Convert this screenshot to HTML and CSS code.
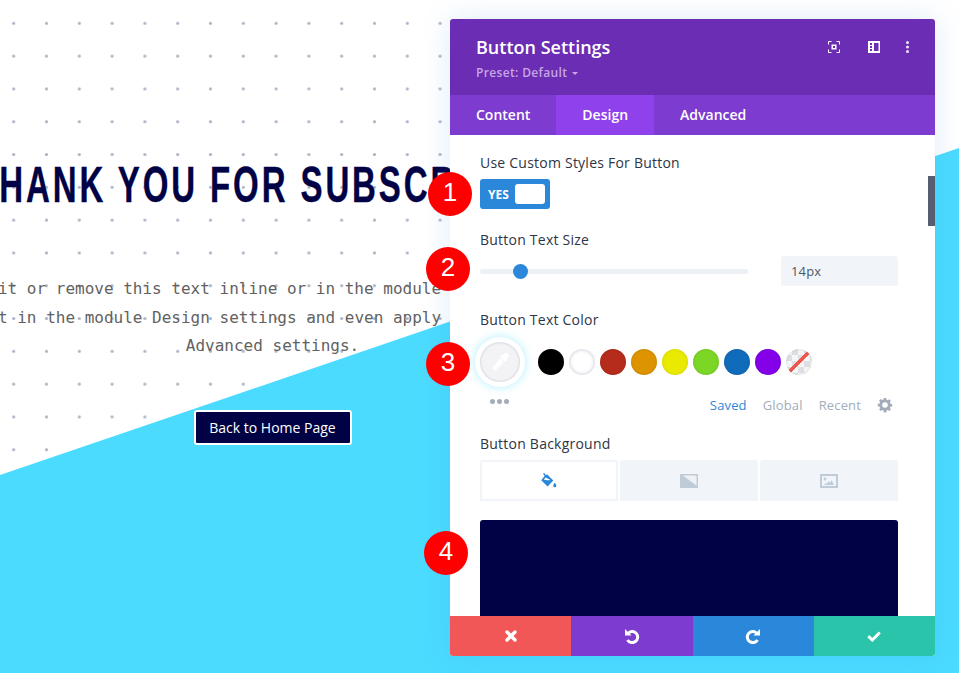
FILE: index.html
```html
<!DOCTYPE html>
<html lang="en">
<head>
<meta charset="utf-8">
<title>Button Settings</title>
<link rel="stylesheet" href="styles.css">
</head>
<body>
<svg class="backdrop" width="959" height="673" viewBox="0 0 959 673" aria-hidden="true">
  <defs>
    <pattern id="dots" x="-2.7" y="6.9" width="32.8" height="32.8" patternUnits="userSpaceOnUse">
      <circle cx="16.4" cy="16.4" r="1.6" fill="#aab4c5"/>
    </pattern>
  </defs>
  <rect width="959" height="673" fill="#fff"/>
  <rect width="959" height="673" fill="url(#dots)"/>
  <polygon points="0,475 959,148 959,673 0,673" fill="#4bdbff"/>
</svg>

<main class="hero">
  <h1 class="hero-title">THANK YOU FOR SUBSCRIBING</h1>
  <p class="hero-copy">Your content goes here. Edit or remove this text inline or in the module Content settings. You can also style every aspect of this content in the module Design settings and even apply custom CSS to this text in the module Advanced settings.</p>
  <a class="hero-button">Back to Home Page</a>
</main>

<section class="panel">
  <header class="panel-head">
    <div class="panel-titles">
      <h2 class="panel-title">Button Settings</h2>
      <div class="panel-preset">Preset: Default <span class="caret"></span></div>
    </div>
    <div class="panel-tools">
      <svg width="12" height="12" viewBox="0 0 12 12" fill="none" stroke="#fff" stroke-width="1"><path d="M.5 3.500V.5h3M8.500.5h3v3M11.500 8.500v3h-3M3.500 11.500h-3v-3"/><path fill="#fff" fill-rule="evenodd" stroke="none" d="M3.500 3.500h5v5h-5zM5 5v2h2V5z"/></svg>
      <svg width="12" height="12" viewBox="0 0 12 12"><path fill="#fff" fill-rule="evenodd" d="M0 0h12v12H0zM6 2v8h4.500V2zM2 2v2h2V2zM2 5v2h2V5zM2 8v2h2V8z"/></svg>
      <svg class="tool-dots" width="3" height="12" viewBox="0 0 3 12"><circle cx="1.500" cy="1.500" r="1.500" fill="#f0e6fa"/><circle cx="1.500" cy="6" r="1.500" fill="#f0e6fa"/><circle cx="1.500" cy="10.500" r="1.500" fill="#f0e6fa"/></svg>
    </div>
  </header>

  <nav class="panel-tabs">
    <span class="panel-tab">Content</span>
    <span class="panel-tab panel-tab-active">Design</span>
    <span class="panel-tab">Advanced</span>
  </nav>

  <div class="panel-body">
    <div class="scroll-thumb"></div>

    <div class="field-label">Use Custom Styles For Button</div>
    <div class="toggle"><span class="toggle-text">YES</span><span class="toggle-knob"></span></div>

    <div class="field-label label-size">Button Text Size</div>
    <div class="slider-row">
      <div class="slider"><span class="slider-knob"></span></div>
      <div class="size-input">14px</div>
    </div>

    <div class="field-label label-color">Button Text Color</div>
    <div class="color-row">
      <div class="picker">
        <div class="picker-inner">
          <svg width="24" height="24" viewBox="0 0 24 24" fill="#fff"><path d="M14 5.500l1.800-1.800c1.100-1.100 3-1.100 4.100 0 1.200 1.100 1.200 3 .1 4.100L18.200 9.600l.8.8-1.700 1.700-5.600-5.600 1.700-1.700zM11.900 8l4 4-6.900 6.900c-1.300 1.300-3 1.700-3.900.9-.8-.9-.4-2.600.9-3.900z"/></svg>
        </div>
      </div>
      <span class="swatch swatch-black"></span>
      <span class="swatch swatch-white"></span>
      <span class="swatch swatch-red"></span>
      <span class="swatch swatch-orange"></span>
      <span class="swatch swatch-yellow"></span>
      <span class="swatch swatch-green"></span>
      <span class="swatch swatch-blue"></span>
      <span class="swatch swatch-purple"></span>
      <span class="swatch swatch-none"></span>
    </div>
    <div class="palette-row">
      <div class="more-dots"><i></i><i></i><i></i></div>
      <div class="palette-links">
        <span class="palette-link palette-link-active">Saved</span>
        <span class="palette-link">Global</span>
        <span class="palette-link">Recent</span>
        <svg width="16" height="16" viewBox="0 0 16 16"><path fill="#a3adba" fill-rule="evenodd" d="M6.800 1h2.400l.3 1.800 1.200.5 1.500-1 1.700 1.700-1 1.500.5 1.200 1.800.3v2.400l-1.800.3-.5 1.200 1 1.500-1.700 1.700-1.500-1-1.200.5-.3 1.800H6.800l-.3-1.800-1.200-.5-1.500 1-1.700-1.700 1-1.500-.5-1.200L.8 9.200V6.800l1.800-.3.5-1.200-1-1.500 1.700-1.700 1.500 1 1.200-.5zM8 5.200a2.800 2.800 0 1 0 0 5.600 2.800 2.800 0 0 0 0-5.600z"/></svg>
      </div>
    </div>

    <div class="field-label label-bg">Button Background</div>
    <div class="bg-tabs">
      <div class="bg-tab bg-tab-active">
        <svg width="16" height="15" viewBox="0 0 16 15"><path fill="#2b87da" fill-rule="evenodd" d="M2 .6L3.300 0l1.500 2.200L6 1.200 12.300 7.500 6.600 13.500.2 7.200 3.600 3zM4.700 4.500L2.800 6.600c2 .9 4.400.9 6.800.4z"/><path fill="#2b87da" d="M13.800 9.800c.8 1.200 1.500 2 1.500 2.900a1.500 1.500 0 0 1-3 0c0-.9.700-1.700 1.500-2.900z"/></svg>
      </div>
      <div class="bg-tab">
        <svg width="18" height="14" viewBox="0 0 18 14"><rect width="18" height="14" fill="#c0cbd8"/><path fill="#eef2f7" d="M3 1.500h13.500v10z"/></svg>
      </div>
      <div class="bg-tab">
        <svg width="18" height="14" viewBox="0 0 18 14"><path fill="#c0cbd8" fill-rule="evenodd" d="M0 0h18v14H0zM2 2v10h14V2z"/><circle cx="5" cy="5" r="1.400" fill="#c0cbd8"/><path fill="#c0cbd8" d="M4 11l2-2 1 1 1.500-3 1.500 2 1.500-3 2.500 5z"/></svg>
      </div>
    </div>
    <div class="bg-preview"></div>
  </div>

  <footer class="panel-foot">
    <span class="foot-btn foot-cancel"><svg width="12" height="12" viewBox="0 0 12 12"><path fill="none" stroke="#fff" stroke-width="3.400" stroke-linecap="round" d="M2 2l8 8M10 2l-8 8"/></svg></span>
    <span class="foot-btn foot-undo"><svg width="16" height="16" viewBox="0 0 16 16"><path fill="none" stroke="#fff" stroke-width="3" d="M4.500 5A5.500 5.500 0 1 1 3.500 12"/><path fill="#fff" d="M1 1l6.500 6.500H1z"/></svg></span>
    <span class="foot-btn foot-redo"><svg width="16" height="16" viewBox="0 0 16 16"><path fill="none" stroke="#fff" stroke-width="3" d="M11.500 5A5.500 5.500 0 1 0 12.500 12"/><path fill="#fff" d="M15 1L8.500 7.500H15z"/></svg></span>
    <span class="foot-btn foot-save"><svg width="14" height="11" viewBox="0 0 14 11"><path fill="none" stroke="#fff" stroke-width="3" d="M1.300 5.200l4 3.800L12.800 1.500"/></svg></span>
  </footer>
</section>

<span class="badge badge-1">1</span>
<span class="badge badge-2">2</span>
<span class="badge badge-3">3</span>
<span class="badge badge-4">4</span>
</body>
</html>
```
FILE: styles.css
```css
* { box-sizing: border-box; }
html, body { margin: 0; height: 673px; overflow: hidden; }
body { position: relative; width: 959px; font-family: "Open Sans", sans-serif; background: #fff; }

.backdrop { position: absolute; left: 0; top: 0; display: block; }

.hero {
  position: relative;
  width: 545px;
  padding-top: 155px;
  display: flex;
  flex-direction: column;
  align-items: center;
}
.hero-title {
  flex: none;
  margin: 0 6px 0 0;
  font: 700 50px/60px "Liberation Sans", sans-serif;
  letter-spacing: 4.4px;
  color: #000245;
  white-space: nowrap;
  transform: scaleX(.66);
  -webkit-text-stroke: .4px #000245;
}
.hero-copy {
  flex: none;
  width: 1080px;
  margin: 59.8px 0 0;
  font: 16px/28.8px "DejaVu Sans Mono", monospace;
  color: #626262;
  text-align: center;
}
.hero-button {
  flex: none;
  margin-top: 49px;
  width: 158px;
  height: 35px;
  display: flex;
  align-items: center;
  justify-content: center;
  background: #000245;
  border: 2px solid #fff;
  border-radius: 3px;
  color: #fff;
  font-size: 14px;
}

.panel {
  position: absolute;
  left: 450px;
  top: 19px;
  width: 485px;
  height: 637px;
  display: flex;
  flex-direction: column;
  background: #fff;
  border-radius: 3px;
  overflow: hidden;
  box-shadow: 0 0 30px rgba(43, 135, 218, .16);
}

.panel-head {
  height: 76px;
  flex: none;
  background: #6b2db3;
  color: #fff;
  display: flex;
  justify-content: space-between;
  padding: 16px 26px 0;
}
.panel-title { margin: 0; font-size: 18px; line-height: 24px; font-weight: 600; }
.panel-preset { margin-top: 6px; font-size: 12px; line-height: 16px; font-weight: 600; letter-spacing: .35px; color: #c7a5e6; }
.caret {
  display: inline-block;
  margin-left: 1px;
  vertical-align: 2px;
  border: 3px solid transparent;
  border-top-color: #c7a5e6;
  border-bottom: 0;
}
.panel-tools { display: flex; align-items: center; gap: 28px; height: 24px; }
.tool-dots { margin-left: -2px; }

.panel-tabs { height: 40px; flex: none; display: flex; background: #7d3bcf; }
.panel-tab { display: flex; align-items: center; padding: 0 26px 2px; color: #fff; font-size: 14px; font-weight: 600; }
.panel-tab-active { background: #8f42ec; }

.panel-body { position: relative; flex: 1; min-height: 0; overflow: hidden; padding: 18px 37px 0 30px; }
.scroll-thumb { position: absolute; right: 0; top: 41px; width: 7px; height: 50px; background: #565e70; }

.field-label { height: 20px; font-size: 14px; line-height: 20px; font-weight: 500; letter-spacing: .23px; color: #2e3546; }
.label-size { margin-top: 21px; }
.label-color { margin-top: 24px; }
.label-bg { margin-top: 19px; }

.toggle {
  margin-top: 6px;
  width: 70px;
  height: 30px;
  display: flex;
  align-items: center;
  justify-content: space-between;
  padding: 0 5px 0 8px;
  background: #2b87da;
  border-radius: 3px;
}
.toggle-text { color: #fff; font-size: 12px; font-weight: 700; }
.toggle-knob { width: 30px; height: 20px; background: #fff; border-radius: 3px; }

.slider-row { margin-top: 6px; height: 30px; display: flex; align-items: center; justify-content: space-between; }
.slider { position: relative; width: 268px; height: 5px; background: #edf0f5; border-radius: 3px; }
.slider-knob { position: absolute; left: 33px; top: -5px; width: 15px; height: 15px; background: #2b87da; border-radius: 50%; }
.size-input {
  width: 117px;
  height: 30px;
  padding-left: 10px;
  background: #f1f5f9;
  border-radius: 3px;
  font-size: 13px;
  line-height: 30px;
  letter-spacing: .15px;
  color: #4c5866;
}

.color-row { margin-top: 7px; height: 50px; display: flex; align-items: center; gap: 5px; }
.picker {
  width: 50px;
  height: 50px;
  margin: 0 8px 0 -5px;
  display: flex;
  align-items: center;
  justify-content: center;
  background: #fff;
  border-radius: 50%;
  box-shadow: 0 0 10px rgba(75, 219, 255, .45);
}
.picker-inner {
  width: 40px;
  height: 40px;
  display: flex;
  align-items: center;
  justify-content: center;
  background: #f3f3f5;
  border-radius: 50%;
  box-shadow: inset 0 0 3px rgba(40, 40, 70, .22);
}
.swatch { width: 26px; height: 26px; border-radius: 50%; flex: none; box-shadow: inset 0 0 3px rgba(0, 0, 0, .14); }
.swatch-black { background: #000; }
.swatch-white { background: #fff; box-shadow: inset 0 0 4px rgba(50, 60, 100, .3); }
.swatch-red { background: #b52c1c; }
.swatch-orange { background: #dd9400; }
.swatch-yellow { background: #eaea00; }
.swatch-green { background: #7cd626; }
.swatch-blue { background: #116bbb; }
.swatch-purple { background: #8300e9; }
.swatch-none {
  background:
    linear-gradient(135deg, transparent 45%, #f0584f 45%, #f0584f 55%, transparent 55%),
    repeating-conic-gradient(#dcdfe4 0 25%, #f6f6f7 0 50%) 0 0 / 12px 12px;
}

.palette-row { height: 20px; margin-top: 8px; display: flex; justify-content: space-between; align-items: center; }
.more-dots { display: flex; gap: 2px; margin-left: 10px; margin-top: -8px; }
.more-dots i { width: 5px; height: 5px; background: #a3adba; border-radius: 50%; }
.palette-links { display: flex; align-items: center; gap: 16px; padding-right: 5px; }
.palette-link { font-size: 13px; font-weight: 500; letter-spacing: .15px; color: #a3adba; }
.palette-link-active { color: #2b87da; }

.bg-tabs { margin-top: 6px; display: grid; grid-template-columns: repeat(3, 1fr); gap: 2px; height: 41px; }
.bg-tab { display: flex; align-items: center; justify-content: center; background: #f1f5f9; border-radius: 3px 3px 0 0; }
.bg-tab-active { background: #fff; border: 2px solid #f1f5f9; }

.bg-preview { margin-top: 19px; height: 140px; background: #000245; border-radius: 3px 3px 0 0; }

.panel-foot { height: 40px; flex: none; display: grid; grid-template-columns: repeat(4, 1fr); }
.foot-btn { display: flex; align-items: center; justify-content: center; }
.foot-cancel { background: #f25757; }
.foot-undo { background: #7d3bcf; }
.foot-redo { background: #2b87da; }
.foot-save { background: #29c4a9; }

.badge {
  position: absolute;
  width: 44px;
  height: 44px;
  padding-bottom: 5px;
  display: flex;
  align-items: center;
  justify-content: center;
  background: #f00;
  border-radius: 50%;
  color: #fff;
  font: 26px/1 "Liberation Sans", sans-serif;
}
.badge-1 { left: 428px; top: 172px; }
.badge-2 { left: 426px; top: 247px; }
.badge-3 { left: 426px; top: 342px; }
.badge-4 { left: 424px; top: 531px; }
```
